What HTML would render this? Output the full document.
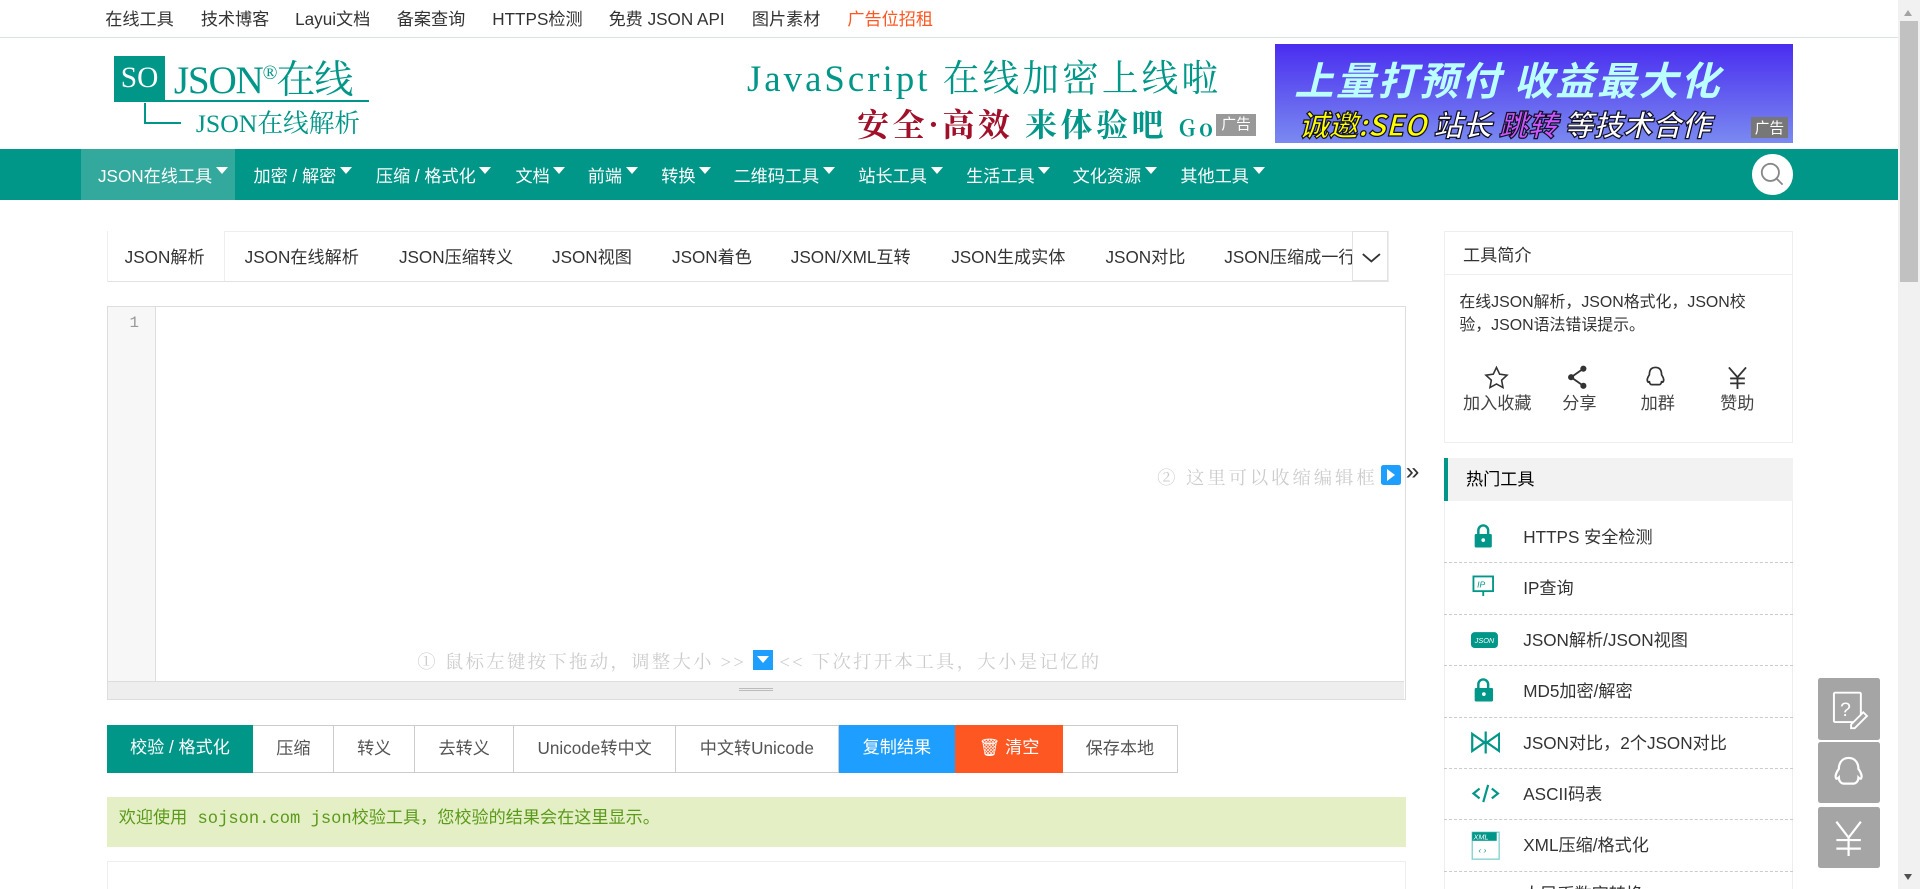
<!DOCTYPE html>
<html><head><meta charset="utf-8"><style>
*{box-sizing:border-box;margin:0;padding:0}
html,body{width:1920px;height:889px;overflow:hidden;background:#fff}
#w{zoom:1.22449;width:1568px;height:726px;position:relative;font-family:"Liberation Sans","Noto Sans CJK SC",sans-serif;font-size:14px;color:#333}
.a{position:absolute}
.top{left:0;top:0;width:1550px;height:31px;border-bottom:1px solid #dde3e3}
.top span{position:absolute;top:4px;font-size:14px;color:#333}
.nav{left:0;top:122px;width:1550px;height:41px;background:#009688}
.nav span{position:absolute;top:10px;color:#fff;font-size:14px}
.nav span:after{content:"";display:inline-block;margin-left:3px;border:5px solid transparent;border-top:6px solid #fff;vertical-align:1px}
.tabs{left:87px;top:189px;width:1047px;height:41px;border:1px solid #eee;border-bottom:1px solid #e2e2e2}
.tabs span{position:absolute;top:9px;font-size:14px}
.ed{left:87px;top:250px;width:1061px;height:322px;border:1px solid #ddd}
.btn{position:absolute;top:592px;height:39px;border:1px solid #ccc;border-left:none;text-align:center;line-height:37px;font-size:14px;color:#555;background:#fff}
.box{border:1px solid #eee}
.hot{left:1179px;width:285px;height:42px;border-bottom:1px dashed #ccc}
.hot span{position:absolute;left:65px;top:9px;font-size:14px;color:#333}
.hot i{position:absolute;left:22px;top:9px;width:22px;height:22px}
.fb{left:1485px;width:50px;height:50px;background:#a5a5a5;border-radius:2px}
</style></head><body><div id="w">
<div class="a top">
<span style="left:86px">在线工具</span><span style="left:164px">技术博客</span><span style="left:241px">Layui文档</span><span style="left:324px">备案查询</span><span style="left:402px">HTTPS检测</span><span style="left:497px">免费 JSON API</span><span style="left:614px">图片素材</span><span style="left:692px;color:#FF5722">广告位招租</span>
</div>
<!-- logo -->
<div class="a" style="left:93px;top:46px;width:42px;height:36px;background:#009688;color:#fff;font:24px 'Liberation Serif',serif;line-height:36px;text-align:center">SO</div>
<div class="a" style="left:142px;top:40px;color:#009688;font:32px 'Liberation Serif','Noto Serif CJK SC',serif;letter-spacing:-1px">JSON<sup style="font-size:16px">®</sup>在线</div>
<div class="a" style="left:93px;top:82px;width:208px;border-top:2px solid #009688"></div>
<div class="a" style="left:118px;top:84px;width:1px;height:16px;background:#009688"></div>
<div class="a" style="left:118px;top:100px;width:30px;height:1px;background:#009688"></div>
<div class="a" style="left:160px;top:84px;color:#009688;font:21px 'Liberation Serif','Noto Serif CJK SC',serif">JSON在线解析</div>
<!-- middle ad -->
<div class="a" style="left:610px;top:40px;color:#009688;font:30px 'Liberation Serif','Noto Serif CJK SC',serif;letter-spacing:2.5px;white-space:nowrap">JavaScript 在线加密上线啦</div>
<div class="a" style="left:700px;top:82px;color:#a0102a;font:bold 26px 'Noto Serif CJK SC',serif;letter-spacing:3px;white-space:nowrap">安全·高效 <span style="color:#009688">来体验吧</span> <span style="color:#009688;font-size:18px">Go</span></div>
<div class="a" style="left:993px;top:93px;width:33px;height:18px;background:#999;color:#fff;font-size:12px;line-height:18px;text-align:center">广告</div>
<div class="a" style="left:1041px;top:36px;width:423px;height:81px;background:linear-gradient(180deg,#4a2df0,#7a8af0);overflow:hidden">
<div style="position:absolute;left:16px;top:6px;color:#bff;font:bold italic 32px 'Noto Sans CJK SC',sans-serif;letter-spacing:2px;white-space:nowrap">上量打预付 收益最大化</div>
<div style="position:absolute;left:20px;top:48px;color:#fff;font:bold italic 24px 'Noto Sans CJK SC',sans-serif;-webkit-text-stroke:1px #112;white-space:nowrap"><span style="color:#ff0">诚邀:SEO</span> 站长 <span style="color:#c5f">跳转</span> 等技术合作</div>
<div style="position:absolute;right:4px;bottom:4px;background:#777;color:#fff;font-size:12px;padding:0 3px">广告</div>
</div>
<!-- nav -->
<div class="a nav">
<div class="a" style="left:66px;top:0;width:126px;height:41px;background:#33a89d"></div>
<span style="left:80px">JSON在线工具</span><span style="left:207px">加密 / 解密</span><span style="left:307px">压缩 / 格式化</span><span style="left:421px">文档</span><span style="left:480px">前端</span><span style="left:540px">转换</span><span style="left:599px">二维码工具</span><span style="left:701px">站长工具</span><span style="left:789px">生活工具</span><span style="left:876px">文化资源</span><span style="left:964px">其他工具</span>
<div class="a" style="left:1431px;top:4px;width:33px;height:33px;border-radius:50%;background:#fff"><svg width="33" height="33"><circle cx="15" cy="15" r="7" fill="none" stroke="#888" stroke-width="1.5"/><path d="M20 20l5 5" stroke="#888" stroke-width="1.5"/></svg></div>
</div>
<!-- tabs -->
<div class="a tabs">
<div class="a" style="left:0;top:-1px;width:96px;height:41px;background:#fff;border-right:1px solid #eee"></div>
<span style="left:14px">JSON解析</span><span style="left:112px">JSON在线解析</span><span style="left:238px">JSON压缩转义</span><span style="left:363px">JSON视图</span><span style="left:461px">JSON着色</span><span style="left:558px">JSON/XML互转</span><span style="left:689px">JSON生成实体</span><span style="left:815px">JSON对比</span><span style="left:912px;white-space:nowrap;width:104px;overflow:hidden">JSON压缩成一行</span>
<div class="a" style="left:1016px;top:-1px;width:30px;height:41px;background:#fff;border:1px solid #e2e2e2"><svg width="30" height="40"><path d="M8 18l7 6 7-6" fill="none" stroke="#333" stroke-width="1.5"/></svg></div>
</div>
<!-- editor -->
<div class="a ed">
<div class="a" style="left:0;top:0;width:40px;height:305px;background:#f7f7f7;border-right:1px solid #ddd"></div>
<div class="a" style="left:18px;top:6px;color:#999;font:13px 'Liberation Mono',monospace">1</div>
<div class="a" style="left:0;top:305px;width:1059px;height:15px;background:#eee;border-top:1px solid #ddd"><div style="margin:5px auto;width:28px;border-top:1px solid #bbb;border-bottom:1px solid #bbb;height:3px"></div></div>
<div class="a" style="left:253px;top:278px;color:#ccc;font:15px 'Liberation Serif','Noto Serif CJK SC',serif;white-space:nowrap;letter-spacing:1.9px">① 鼠标左键按下拖动，调整大小 &gt;&gt; <span style="display:inline-block;width:16px;height:16px;background:#1E9FFF;vertical-align:-2px;position:relative"><span style="position:absolute;left:3px;top:5px;border:5px solid transparent;border-top:6px solid #fff"></span></span> &lt;&lt; 下次打开本工具，大小是记忆的</div>
</div>
<div class="a" style="left:945px;top:379px;color:#ccc;font:15px 'Liberation Serif','Noto Serif CJK SC',serif;white-space:nowrap;letter-spacing:2.4px">② 这里可以收缩编辑框</div>
<div class="a" style="left:1128px;top:380px;width:16px;height:16px;background:#1E9FFF;border-radius:2px"><span style="position:absolute;left:5px;top:3px;border:5px solid transparent;border-left:7px solid #fff"></span></div>
<div class="a" style="left:1148px;top:374px;font-size:20px;color:#333">»</div>
<!-- buttons -->
<div class="btn" style="left:87px;width:120px;background:#009688;color:#fff;border:none">校验 / 格式化</div>
<div class="btn" style="left:207px;width:66px">压缩</div>
<div class="btn" style="left:273px;width:66px">转义</div>
<div class="btn" style="left:339px;width:81px">去转义</div>
<div class="btn" style="left:420px;width:132px">Unicode转中文</div>
<div class="btn" style="left:552px;width:133px">中文转Unicode</div>
<div class="btn" style="left:685px;width:95px;background:#1E9FFF;color:#fff;border:none">复制结果</div>
<div class="btn" style="left:780px;width:88px;background:#FF5722;color:#fff;border:none">🗑 清空</div>
<div class="btn" style="left:868px;width:94px">保存本地</div>
<div class="a" style="left:87px;top:651px;width:1061px;height:41px;background:#e5efc6;color:#5a9a1a;font:14px 'Liberation Mono','Noto Sans CJK SC',monospace;line-height:38px;padding-left:10px">欢迎使用 sojson.com json校验工具，您校验的结果会在这里显示。</div>
<div class="a" style="left:87px;top:703px;width:1061px;height:30px;border:1px solid #eee"></div>
<!-- right -->
<div class="a box" style="left:1179px;top:189px;width:285px;height:173px">
<div style="height:35px;border-bottom:1px solid #eee;padding:7px 15px;font-size:14px">工具简介</div>
<div style="padding:13px 12px 0;font-size:13px;line-height:19px;color:#333">在线JSON解析，JSON格式化，JSON校验，JSON语法错误提示。</div>
<div class="a" style="top:108px;left:0;width:285px;font-size:14px;color:#444">
<div class="a" style="left:15px;top:20px">加入收藏</div><div class="a" style="left:96px;top:20px">分享</div><div class="a" style="left:160px;top:20px">加群</div><div class="a" style="left:225px;top:20px">赞助</div>
<svg class="a" style="left:31px;top:0" width="22" height="20"><path d="M11 2l2.6 5.5 6 .8-4.4 4.1 1.1 6-5.3-2.9-5.3 2.9 1.1-6L2.4 8.3l6-.8z" fill="none" stroke="#333" stroke-width="1.3"/></svg>
<svg class="a" style="left:98px;top:0" width="22" height="20"><circle cx="15" cy="3" r="2.5" fill="#333"/><circle cx="5" cy="10" r="2.5" fill="#333"/><circle cx="15" cy="17" r="2.5" fill="#333"/><path d="M15 3L5 10l10 7" fill="none" stroke="#333" stroke-width="1.5"/></svg>
<svg class="a" style="left:161px;top:0" width="22" height="20"><path d="M11 2c-4 0-5 3-5 6-2 3-2 5-1 6 1 0 1-1 1-1 0 2 1 3 2 3h6c1 0 2-1 2-3 0 0 0 1 1 1 1-1 1-3-1-6 0-3-1-6-5-6z" fill="none" stroke="#333" stroke-width="1.4"/></svg>
<svg class="a" style="left:228px;top:0" width="22" height="20"><path d="M4 2l7 8 7-8M11 10v10M5 11h12M5 15h12" fill="none" stroke="#333" stroke-width="1.5"/></svg>
</div>
</div>
<div class="a" style="left:1179px;top:374px;width:285px;height:35px;background:#f2f2f2;border-left:4px solid #009688;padding:6px 15px;font-size:14px;color:#000">热门工具</div>
<div class="a box" style="left:1179px;top:409px;width:285px;height:330px;border-top:none"></div>
<div class="a hot" style="top:418px"><i><svg width="22" height="22"><rect x="3" y="9" width="14" height="11" rx="1" fill="#009688"/><path d="M6 9V6a4 4 0 018 0v3" fill="none" stroke="#009688" stroke-width="2"/><circle cx="10" cy="14" r="1.5" fill="#fff"/></svg></i><span>HTTPS 安全检测</span></div>
<div class="a hot" style="top:460px"><i><svg width="22" height="22"><rect x="2" y="2" width="16" height="12" fill="none" stroke="#009688" stroke-width="1.5"/><text x="5" y="11" font-size="7" fill="#009688" font-family="Liberation Sans">IP</text><path d="M10 14v4" stroke="#009688" stroke-width="1.5"/></svg></i><span>IP查询</span></div>
<div class="a hot" style="top:502px"><i><svg width="24" height="22"><rect x="0" y="5" width="22" height="13" rx="3" fill="#009688"/><text x="3" y="14" font-size="6" fill="#fff" font-family="Liberation Sans">JSON</text></svg></i><span>JSON解析/JSON视图</span></div>
<div class="a hot" style="top:544px"><i><svg width="22" height="22"><rect x="3" y="9" width="15" height="11" rx="1" fill="#009688"/><path d="M6 9V6a4 4 0 018 0v3" fill="none" stroke="#009688" stroke-width="2"/><circle cx="10.5" cy="14" r="1.5" fill="#fff"/></svg></i><span>MD5加密/解密</span></div>
<div class="a hot" style="top:586px"><i><svg width="24" height="22"><path d="M1 4l10 7L1 18zM23 4l-10 7 10 7zM12 2v18" fill="none" stroke="#009688" stroke-width="1.8"/></svg></i><span>JSON对比，2个JSON对比</span></div>
<div class="a hot" style="top:628px"><i><svg width="24" height="22"><path d="M7 7l-5 4 5 4M17 7l5 4-5 4M14 4l-4 14" fill="none" stroke="#009688" stroke-width="1.8"/></svg></i><span>ASCII码表</span></div>
<div class="a hot" style="top:670px"><i><svg width="24" height="24"><rect x="1" y="1" width="22" height="22" fill="none" stroke="#7cc" stroke-width="1"/><rect x="1" y="1" width="20" height="7" fill="#009688"/><text x="2" y="7" font-size="6" fill="#fff" font-family="Liberation Sans">XML</text><text x="6" y="18" font-size="7" fill="#009688">‹ ›</text></svg></i><span>XML压缩/格式化</span></div>
<div class="a" style="left:1179px;top:712px;width:285px;height:14px;color:#333;font-size:14px;overflow:hidden"><span style="position:absolute;left:65px;top:7px">人民币数字转换</span></div>
<!-- float buttons -->
<div class="a fb" style="top:554px"><svg width="50" height="50"><rect x="13" y="12" width="22" height="24" rx="1" fill="none" stroke="#fff" stroke-width="1.6"/><text x="18" y="31" font-size="16" fill="#fff" font-family="Liberation Sans">?</text><path d="M27 38l10-10 3 3-10 10h-3z" fill="#a5a5a5" stroke="#fff" stroke-width="1.5"/></svg></div>
<div class="a fb" style="top:606px"><svg width="50" height="50"><path d="M25 13c-6 0-8 5-8 9-3 4-3 7-2 8 1 0 2-1 2-1 0 3 2 5 4 5h8c2 0 4-2 4-5 0 0 1 1 2 1 1-1 1-4-2-8 0-4-2-9-8-9z" fill="none" stroke="#fff" stroke-width="1.8"/></svg></div>
<div class="a fb" style="top:659px"><svg width="50" height="50"><path d="M15 12l10 13 10-13M25 25v15M15 27h20M15 34h20" fill="none" stroke="#fff" stroke-width="1.8"/></svg></div>
<!-- scrollbar -->
<div class="a" style="left:1550px;top:0;width:18px;height:726px;background:#f1f1f1"></div>
<div class="a" style="left:1552px;top:17px;width:14px;height:213px;background:#c1c1c1"></div>
<div class="a" style="left:1555px;top:5px;border:4px solid transparent;border-bottom:5px solid #a3a3a3"></div>
<div class="a" style="left:1555px;top:714px;border:4px solid transparent;border-top:5px solid #505050"></div>
</div></body></html>
